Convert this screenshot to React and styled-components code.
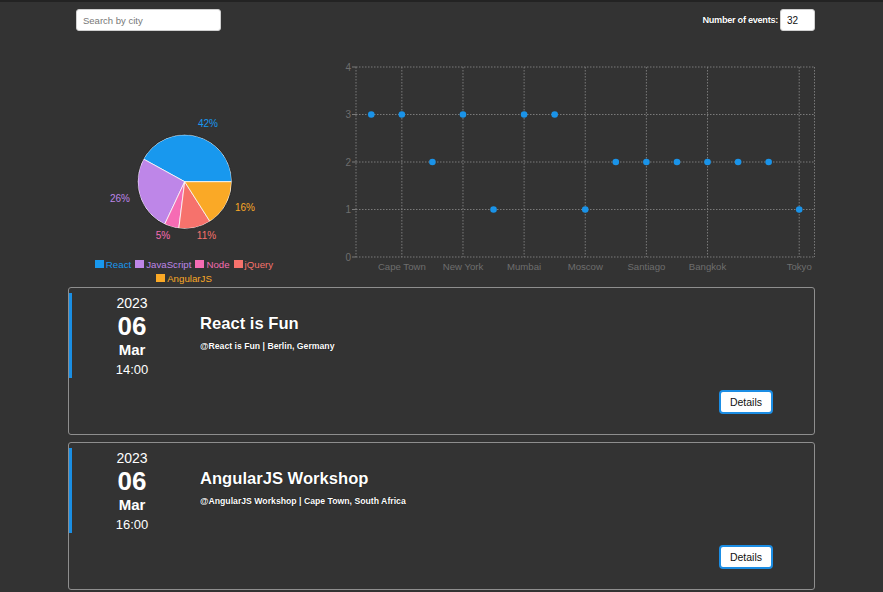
import React from 'react';
import styled, { createGlobalStyle } from 'styled-components';

const Global = createGlobalStyle`
  html, body { margin: 0; padding: 0; background: #333333; }
  body { font-family: "Liberation Sans", Arial, sans-serif; color: #ffffff; }
  * { box-sizing: border-box; }
`;

const Page = styled.div`
  border-top: 2px solid #232323;
  padding: 0 68px;
  min-height: 590px;
`;

const Header = styled.header`
  display: flex;
  justify-content: space-between;
  align-items: flex-start;
  height: 40px;
  padding: 7px 0 0 8px;
`;

const SearchInput = styled.input`
  width: 145px;
  height: 22px;
  border: 1px solid #d0d0d0;
  border-radius: 3px;
  background: #fff;
  padding: 0 6px;
  font-family: "Liberation Sans", Arial, sans-serif;
  font-size: 9.5px;
  color: #222;
  outline: none;
  &::placeholder { color: #777; }
`;

const CountBox = styled.div`
  display: flex;
  align-items: center;
  gap: 2px;
`;

const CountLabel = styled.label`
  font-size: 9.2px;
  font-weight: bold;
  letter-spacing: -0.3px;
  color: #fff;
  text-shadow: 0 0 1px #000;
`;

const CountInput = styled.input`
  width: 35px;
  height: 22px;
  border: 1px solid #d0d0d0;
  border-radius: 3px;
  background: #fff;
  padding: 0 6px;
  font-family: "Liberation Sans", Arial, sans-serif;
  font-size: 10px;
  color: #111;
  outline: none;
`;

const ChartsRow = styled.section`
  display: flex;
  height: 243px;
`;

const PieCol = styled.div`
  width: 232px;
  display: flex;
  flex-direction: column;
`;

const ScatterCol = styled.div`
  flex: 1;
`;

const Legend = styled.ul`
  list-style: none;
  margin: 0 auto;
  padding: 0;
  width: 184px;
  display: flex;
  flex-wrap: wrap;
  justify-content: center;
  column-gap: 4px;
`;

const LegendItem = styled.li`
  display: flex;
  align-items: center;
  gap: 2px;
  height: 14px;
  font-size: 9.7px;
  color: ${p => p.$color};
  &::before {
    content: "";
    width: 9px;
    height: 8px;
    background: ${p => p.$color};
  }
`;

const CardList = styled.div`
  display: flex;
  flex-direction: column;
  gap: 7px;
  margin-top: 2px;
`;

const Card = styled.article`
  height: 148px;
  border: 1px solid #8e8e8e;
  border-radius: 3px;
  display: flex;
  align-items: stretch;
  padding-top: 5px;
`;

const DateCol = styled.div`
  width: 123px;
  align-self: flex-start;
  border-left: 3px solid #1a8fe4;
  display: flex;
  flex-direction: column;
  align-items: center;
  padding-top: 2px;
`;

const Year = styled.div`
  font-size: 14px;
  line-height: 16px;
`;

const Day = styled.div`
  font-size: 26px;
  line-height: 30px;
  font-weight: bold;
`;

const Month = styled.div`
  font-size: 15px;
  line-height: 18px;
  font-weight: bold;
`;

const Time = styled.div`
  font-size: 13px;
  line-height: 16px;
  margin-top: 3px;
`;

const Body = styled.div`
  flex: 1;
  display: flex;
  flex-direction: column;
  padding: 21px 41px 20px 8px;
`;

const Title = styled.h2`
  margin: 0;
  font-size: 16.6px;
  line-height: 20px;
  font-weight: bold;
  text-shadow: 0 0 1px #000;
`;

const Subtitle = styled.p`
  margin: 6px 0 0;
  font-size: 8.7px;
  line-height: 12px;
  font-weight: bold;
  text-shadow: 0 0 1px #000;
`;

const DetailsButton = styled.button`
  margin-top: auto;
  align-self: flex-end;
  width: 54px;
  height: 24px;
  background: #fff;
  border: 2px solid #1b8de4;
  border-radius: 4px;
  font-family: "Liberation Sans", Arial, sans-serif;
  font-size: 10.5px;
  color: #111;
  padding: 0;
`;

const pieData = [
  { name: 'React', pct: 42, color: '#1898ee', lx: 140, ly: 81 },
  { name: 'JavaScript', pct: 26, color: '#be86e8', lx: 52, ly: 156 },
  { name: 'Node', pct: 5, color: '#f66cb4', lx: 95, ly: 193 },
  { name: 'jQuery', pct: 11, color: '#f6726c', lx: 138.5, ly: 193 },
  { name: 'AngularJS', pct: 16, color: '#faa926', lx: 177, ly: 165 },
];

function PieChart() {
  const cx = 116.7, cy = 139.7, r = 47;
  let start = 0;
  const pt = a => {
    const rad = (a * Math.PI) / 180;
    return [cx + r * Math.cos(rad), cy - r * Math.sin(rad)];
  };
  const sectors = pieData.map(d => {
    const a0 = start;
    const a1 = start + (d.pct / 100) * 360;
    start = a1;
    const [x0, y0] = pt(a0);
    const [x1, y1] = pt(a1);
    const large = a1 - a0 > 180 ? 1 : 0;
    return (
      <path
        key={d.name}
        d={`M${cx},${cy} L${x0},${y0} A${r},${r} 0 ${large} 0 ${x1},${y1} Z`}
        fill={d.color}
        stroke="#fff"
        strokeWidth="0.8"
      />
    );
  });
  return (
    <svg width="232" height="216">
      {sectors}
      <circle cx={cx} cy={cy} r={r + 0.5} fill="none" stroke="#1c1c1c" strokeWidth="0.8" />
      {pieData.map(d => (
        <text
          key={d.name}
          x={d.lx}
          y={d.ly}
          fill={d.color}
          fontSize="10"
          textAnchor="middle"
          dominantBaseline="central"
          fontFamily="Liberation Sans, Arial, sans-serif"
        >
          {d.pct}%
        </text>
      ))}
    </svg>
  );
}

const values = [3, 3, 2, 3, 1, 3, 3, 1, 2, 2, 2, 2, 2, 2, 1];
const labels = { 1: 'Cape Town', 3: 'New York', 5: 'Mumbai', 7: 'Moscow', 9: 'Santiago', 11: 'Bangkok', 14: 'Tokyo' };

function ScatterChart() {
  const x0 = 56, x1 = 514.5, yTop = 25, yBot = 215;
  const band = (x1 - x0) / values.length;
  const xAt = i => x0 + band * (i + 0.5);
  const yAt = v => yBot - (v * (yBot - yTop)) / 4;
  const grid = '#7a7a7a';
  const dash = '1.5 1.5';
  const tick = '#6e6e6e';
  return (
    <svg width="515" height="243" fontFamily="Liberation Sans, Arial, sans-serif">
      {[0, 1, 2, 3, 4].map(v => (
        <line key={'h' + v} x1={x0} x2={x1} y1={yAt(v)} y2={yAt(v)} stroke={grid} strokeDasharray={dash} />
      ))}
      <line x1={x0} x2={x0} y1={yTop} y2={yBot} stroke={grid} strokeDasharray={dash} />
      <line x1={x1} x2={x1} y1={yTop} y2={yBot} stroke={grid} strokeDasharray={dash} />
      {Object.keys(labels).map(k => (
        <line key={'v' + k} x1={xAt(+k)} x2={xAt(+k)} y1={yTop} y2={yBot} stroke={grid} strokeDasharray={dash} />
      ))}
      {[0, 1, 2, 3, 4].map(v => (
        <g key={'yl' + v}>
          <line x1={x0 - 4} x2={x0} y1={yAt(v)} y2={yAt(v)} stroke={grid} />
          <text x={x0 - 5} y={yAt(v)} fill={tick} fontSize="10" textAnchor="end" dominantBaseline="central">{v}</text>
        </g>
      ))}
      {Object.entries(labels).map(([k, name]) => (
        <text key={'xl' + k} x={xAt(+k)} y={224} fill={tick} fontSize="9.6" textAnchor="middle" dominantBaseline="central">{name}</text>
      ))}
      {values.map((v, i) => (
        <circle key={'d' + i} cx={xAt(i)} cy={yAt(v)} r="3.3" fill="#1a93e8" />
      ))}
    </svg>
  );
}

const events = [
  { title: 'React is Fun', sub: '@React is Fun | Berlin, Germany', time: '14:00' },
  { title: 'AngularJS Workshop', sub: '@AngularJS Workshop | Cape Town, South Africa', time: '16:00' },
];

export default function App() {
  return (
    <>
      <Global />
      <Page>
        <Header>
          <SearchInput placeholder="Search by city" />
          <CountBox>
            <CountLabel>Number of events:</CountLabel>
            <CountInput defaultValue="32" />
          </CountBox>
        </Header>
        <ChartsRow>
          <PieCol>
            <PieChart />
            <Legend>
              {pieData.map(d => (
                <LegendItem key={d.name} $color={d.color}>{d.name}</LegendItem>
              ))}
            </Legend>
          </PieCol>
          <ScatterCol>
            <ScatterChart />
          </ScatterCol>
        </ChartsRow>
        <CardList>
          {events.map(e => (
            <Card key={e.title}>
              <DateCol>
                <Year>2023</Year>
                <Day>06</Day>
                <Month>Mar</Month>
                <Time>{e.time}</Time>
              </DateCol>
              <Body>
                <Title>{e.title}</Title>
                <Subtitle>{e.sub}</Subtitle>
                <DetailsButton>Details</DetailsButton>
              </Body>
            </Card>
          ))}
        </CardList>
      </Page>
    </>
  );
}
